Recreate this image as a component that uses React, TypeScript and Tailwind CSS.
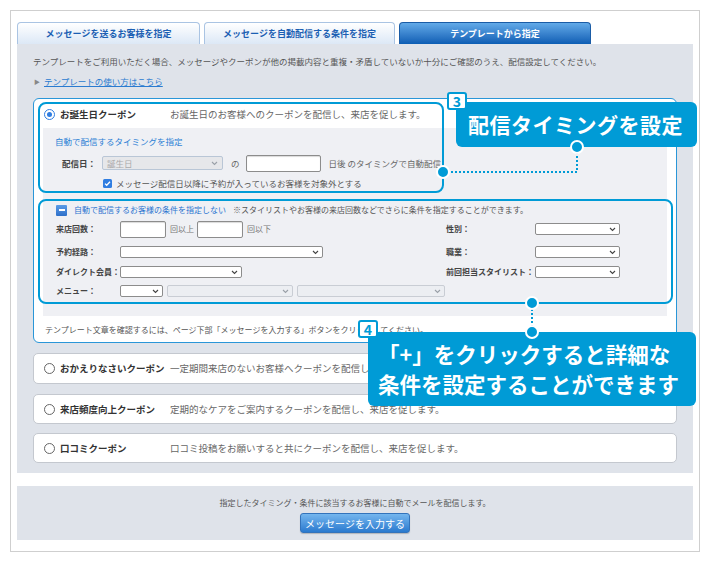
import React from 'react';

const Chevron = ({ muted }: { muted?: boolean }) => (
    <svg width="7" height="5" viewBox="0 0 7 5" className="shrink-0">
        <path d="M1 1l2.5 2.5L6 1" fill="none" stroke={muted ? '#9aa0a8' : '#444'} strokeWidth="1.1" />
    </svg>
);

const Select = ({ w, disabled }: { w: string; disabled?: boolean }) => (
    <div
        className={`${w} h-[12px] flex items-center justify-end pr-[3px] rounded-[2px] border ${
            disabled ? 'bg-[#eceef2] border-[#c9cdd4]' : 'bg-white border-[#8c8c8c]'
        }`}
    >
        <Chevron muted={disabled} />
    </div>
);

const TextBox = ({ w }: { w: string }) => (
    <div className={`${w} h-[17px] bg-white border border-[#8c8c8c] rounded-[2px] shadow-[inset_0_1px_1px_rgba(0,0,0,0.15)]`} />
);

const Radio = ({ checked }: { checked?: boolean }) =>
    checked ? (
        <div className="w-[11px] h-[11px] rounded-full border-[1.5px] border-[#2f7de1] bg-white flex items-center justify-center">
            <div className="w-[5px] h-[5px] rounded-full bg-[#2f7de1]" />
        </div>
    ) : (
        <div className="w-[11px] h-[11px] rounded-full border border-[#666] bg-white" />
    );

const coupons = [
    { title: 'おかえりなさいクーポン', desc: '一定期間来店のないお客様へクーポンを配信し、来店を促します。', mt: 'mt-[10px]', h: 'h-[31px]' },
    { title: '来店頻度向上クーポン', desc: '定期的なケアをご案内するクーポンを配信し、来店を促します。', mt: 'mt-[10px]', h: 'h-[30px]' },
    { title: '口コミクーポン', desc: '口コミ投稿をお願いすると共にクーポンを配信し、来店を促します。', mt: 'mt-[9px]', h: 'h-[30px]' },
];

export default function App() {
    return (
        <div className="relative w-[710px] h-[562px] bg-white pt-[10px] pl-[10px] font-['Noto_Sans_CJK_JP',sans-serif] text-[#555]">
            <div className="w-[690px] h-[542px] border border-[#cfcfcf] px-[6px] pt-[11px]">
                {/* Tabs */}
                <div className="flex gap-[4px] h-[22px]">
                    <div className="w-[183px] flex items-center justify-center rounded-t-[4px] border border-b-0 border-[#aac4e3] bg-gradient-to-b from-white to-[#dce8f6] text-[9px] font-bold text-[#1c5fb3]">
                        メッセージを送るお客様を指定
                    </div>
                    <div className="w-[191px] flex items-center justify-center rounded-t-[4px] border border-b-0 border-[#aac4e3] bg-gradient-to-b from-white to-[#dce8f6] text-[9px] font-bold text-[#1c5fb3]">
                        メッセージを自動配信する条件を指定
                    </div>
                    <div className="w-[192px] flex items-center justify-center rounded-t-[4px] border border-b-0 border-[#1a5ca6] bg-gradient-to-b from-[#62aae8] to-[#0b5db4] text-[9px] font-bold text-white">
                        テンプレートから指定
                    </div>
                </div>

                {/* Main panel */}
                <div className="bg-[#dfe3ea] px-[16px] pt-[11px] pb-[10px]">
                    <div className="h-[12px] leading-[12px] text-[8.5px] text-[#555]">
                        テンプレートをご利用いただく場合、メッセージやクーポンが他の掲載内容と重複・矛盾していないか十分にご確認のうえ、配信設定してください。
                    </div>
                    <div className="mt-[8px] h-[12px] flex items-center gap-[4px] text-[8.5px]">
                        <span className="text-[6px] text-[#888] ml-[1px]">▶</span>
                        <span className="text-[#2a7bd0] underline">テンプレートの使い方はこちら</span>
                    </div>

                    {/* Selected coupon */}
                    <div className="mt-[11px] h-[245px] bg-white border border-[#2a96d8] rounded-[6px] px-[9px]">
                        <div className="h-[29px] flex items-center pt-[2px]">
                            <div className="ml-[1px] w-[16px]">
                                <Radio checked />
                            </div>
                            <div className="w-[110px] text-[9.5px] font-bold text-[#333]">お誕生日クーポン</div>
                            <div className="text-[9.5px] text-[#666]">お誕生日のお客様へのクーポンを配信し、来店を促します。</div>
                        </div>

                        <div className="h-[188px] bg-[#eff0f4] pt-[7px]">
                            <div className="h-[12px] leading-[12px] pl-[12px] text-[8.5px] text-[#2b7fd4]">自動で配信するタイミングを指定</div>
                            <div className="mt-[7px] h-[18px] flex items-center pl-[19px] text-[8.5px]">
                                <div className="w-[40px] font-bold text-[#444]">配信日：</div>
                                <div className="w-[121px] h-[14px] flex items-center justify-between px-[4px] rounded-[2px] border border-[#b9c6d6] bg-[#e6e7ea]">
                                    <span className="text-[#aaa]">誕生日</span>
                                    <Chevron muted />
                                </div>
                                <span className="ml-[8px] text-[#666]">の</span>
                                <div className="ml-[6px]">
                                    <TextBox w="w-[75px]" />
                                </div>
                                <span className="ml-[8px] text-[#666]">日後 のタイミングで自動配信</span>
                            </div>
                            <div className="mt-[5px] h-[12px] flex items-center pl-[60px] text-[8.5px] text-[#555]">
                                <svg width="9" height="9" viewBox="0 0 9 9" className="shrink-0">
                                    <rect width="9" height="9" rx="1.5" fill="#2f7de1" />
                                    <path d="M2 4.6l1.7 1.7L7 2.8" fill="none" stroke="white" strokeWidth="1.3" />
                                </svg>
                                <span className="ml-[4px]">メッセージ配信日以降に予約が入っているお客様を対象外とする</span>
                            </div>

                            {/* Conditions */}
                            <div className="mt-[15px] h-[12px] flex items-center pl-[13px] text-[8px]">
                                <div className="w-[11px] h-[11px] rounded-[1px] bg-gradient-to-b from-[#5b9be6] to-[#2d6fc9] flex items-center justify-center">
                                    <div className="w-[6px] h-[1.5px] bg-white" />
                                </div>
                                <span className="ml-[7px] text-[#2b74d0]">自動で配信するお客様の条件を指定しない</span>
                                <span className="ml-[7px] text-[#555]">※スタイリストやお客様の来店回数などでさらに条件を指定することができます。</span>
                            </div>
                            <div className="mt-[4px] h-[18px] flex items-center pl-[13px] text-[8px]">
                                <div className="w-[390px] flex items-center">
                                    <div className="w-[64px] font-bold text-[#444]">来店回数：</div>
                                    <TextBox w="w-[46px]" />
                                    <span className="ml-[4px] w-[27px] text-[#777]">回以上</span>
                                    <TextBox w="w-[46px]" />
                                    <span className="ml-[4px] text-[#777]">回以下</span>
                                </div>
                                <div className="w-[89px] font-bold text-[#444]">性別：</div>
                                <Select w="w-[85px]" />
                            </div>
                            <div className="mt-[8px] h-[12px] flex items-center pl-[13px] text-[8px]">
                                <div className="w-[390px] flex items-center">
                                    <div className="w-[64px] font-bold text-[#444]">予約経路：</div>
                                    <Select w="w-[203px]" />
                                </div>
                                <div className="w-[89px] font-bold text-[#444]">職業：</div>
                                <Select w="w-[85px]" />
                            </div>
                            <div className="mt-[8px] h-[12px] flex items-center pl-[13px] text-[8px]">
                                <div className="w-[390px] flex items-center">
                                    <div className="w-[64px] font-bold text-[#444] whitespace-nowrap">ダイレクト会員：</div>
                                    <Select w="w-[122px]" />
                                </div>
                                <div className="w-[89px] font-bold text-[#444] whitespace-nowrap">前回担当スタイリスト：</div>
                                <Select w="w-[85px]" />
                            </div>
                            <div className="mt-[7px] h-[12px] flex items-center pl-[13px] text-[8px]">
                                <div className="w-[64px] font-bold text-[#444]">メニュー：</div>
                                <Select w="w-[43px]" />
                                <div className="ml-[4px]">
                                    <Select w="w-[126px]" disabled />
                                </div>
                                <div className="ml-[4px]">
                                    <Select w="w-[148px]" disabled />
                                </div>
                            </div>
                        </div>

                        <div className="mt-[8px] h-[12px] leading-[12px] pl-[2px] text-[8px] text-[#555]">
                            テンプレート文章を確認するには、ページ下部「メッセージを入力する」ボタンをクリックしてください。
                        </div>
                    </div>

                    {coupons.map((c) => (
                        <div key={c.title} className={`${c.mt} ${c.h} bg-white border border-[#c4c8cf] rounded-[5px] flex items-center px-[9px]`}>
                            <div className="ml-[1px] w-[16px]">
                                <Radio />
                            </div>
                            <div className="w-[110px] text-[9.5px] font-bold text-[#333] whitespace-nowrap">{c.title}</div>
                            <div className="text-[9.5px] text-[#666]">{c.desc}</div>
                        </div>
                    ))}
                </div>

                {/* Footer panel */}
                <div className="mt-[13px] h-[54px] bg-[#dfe3ea] pt-[11px] flex flex-col items-center">
                    <div className="h-[12px] leading-[12px] text-[8px] text-[#555]">
                        指定したタイミング・条件に該当するお客様に自動でメールを配信します。
                    </div>
                    <div className="mt-[4px] w-[110px] h-[20px] flex items-center justify-center rounded-[3px] border border-[#3373bb] bg-gradient-to-b from-[#74b6ee] to-[#2a7acf] text-[10px] text-white shadow-[0_1px_1px_rgba(0,0,0,0.2)]">
                        メッセージを入力する
                    </div>
                </div>
            </div>

            {/* Annotation highlights */}
            <div className="absolute left-[38px] top-[102px] w-[406px] h-[91px] border-2 border-[#009bd6] rounded-[8px]" />
            <div className="absolute left-[38px] top-[199px] w-[635px] h-[105px] border-2 border-[#009bd6] rounded-[8px]" />

            {/* Callout boxes */}
            <div className="absolute left-[456px] top-[102px] w-[241px] h-[45px] rounded-[6px] bg-[#009bd6] flex items-center pl-[12px] text-[21px] font-bold text-white tracking-[0.5px]">
                配信タイミングを設定
            </div>
            <div className="absolute left-[368px] top-[332px] w-[328px] h-[74px] rounded-[6px] bg-[#009bd6] pl-[10px] pt-[7px] text-[21.5px] leading-[30px] font-bold text-white">
                <div>「+」をクリックすると詳細な</div>
                <div>条件を設定することができます</div>
            </div>

            {/* Connectors */}
            <svg className="absolute left-0 top-0 pointer-events-none" width="710" height="562">
                <path d="M577 152V172H449" fill="none" stroke="#009bd6" strokeWidth="2" strokeDasharray="2 2" />
                <path d="M532 309V326" fill="none" stroke="#009bd6" strokeWidth="2" strokeDasharray="2 2" />
                <circle cx="577" cy="147" r="6" fill="#009bd6" stroke="white" strokeWidth="2" />
                <circle cx="443" cy="172" r="6" fill="#009bd6" stroke="white" strokeWidth="2" />
                <circle cx="532" cy="303" r="6" fill="#009bd6" stroke="white" strokeWidth="2" />
                <circle cx="532" cy="332" r="6" fill="#009bd6" stroke="white" strokeWidth="2" />
            </svg>

            {/* Badges */}
            <div className="absolute left-[447px] top-[92px] w-[20px] h-[18px] bg-white border-2 border-[#009bd6] rounded-[3px] flex items-center justify-center text-[14px] leading-none font-bold text-[#009bd6]">
                3
            </div>
            <div className="absolute left-[358px] top-[320px] w-[20px] h-[18px] bg-white border-2 border-[#009bd6] rounded-[3px] flex items-center justify-center text-[14px] leading-none font-bold text-[#009bd6]">
                4
            </div>
        </div>
    );
}
